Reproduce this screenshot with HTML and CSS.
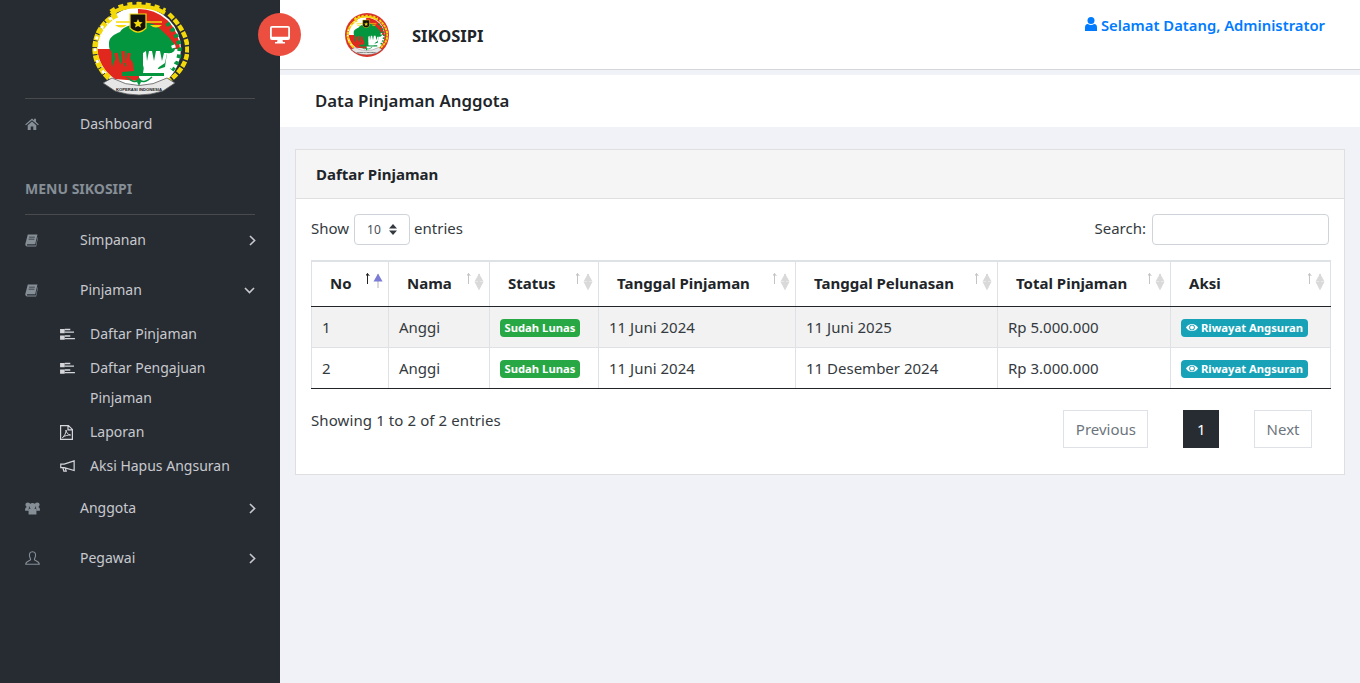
FILE: index.html
```html
<!DOCTYPE html>
<html>
<head>
    <title>SIKOSIPI - Data Pinjaman Anggota</title>
    <link rel="stylesheet" href="styles.css">
</head>
<body>
    <svg class="defs" width="0" height="0">
        <defs>
            <symbol id="emblem" viewBox="92 0 98 96">
                <circle cx="140" cy="48" r="42" fill="#fff"/>
                <path d="M139 8 A41 41 0 0 1 181 48 L139 48 Z" fill="#e0281f"/>
                <path d="M98 48 L140 48 L140 80 L116 78 A42 42 0 0 1 98 48 Z" fill="#e0281f"/>
                <!-- tree -->
                <path d="M110 42 C110 36 116 33 121 31 C126 22 150 20 156 24 C164 30 172 38 176 44 C177 50 174 53 168 52 L166 66 L160 68 L150 68 L146 60 L144 72 L165 72 L165 75 L123 75 L123 71 L135 70 L134 62 L130 56 L127 66 L123 60 L120 66 L116 58 L113 66 C112 58 114 52 112 50 C110 48 110 46 110 42 Z" fill="#03963e"/>
                <path d="M144 52 L147 50 L148 60 L150 50 L153 50 L155 60 L157 50 L161 50 L163 60 L165 52 L168 52 L166 62 L160 66 L156 72 L146 72 L144 64 Z" fill="#fff"/>
                <path d="M117 52 L120 66 M124 50 L125 62 M130 52 L128 64" stroke="#e0281f" stroke-width="3.5" fill="none"/>
                <path d="M128 76 Q136 84 140 78 Q144 84 153 76" fill="none" stroke="#03963e" stroke-width="1.6"/>
                <path d="M140 77 L142 81 L140 85 L138 81 Z" fill="#03963e"/>
                <!-- chain on the left -->
                <path d="M118 14 C98 22 84 54 111 78" fill="none" stroke="#f4d90a" stroke-width="5.5" stroke-dasharray="6 1"/>
                <path d="M118 14 C98 22 84 54 111 78" fill="none" stroke="#fff" stroke-width="2.8" stroke-dasharray="3 9" stroke-dashoffset="-6"/>
                <!-- gear on the top -->
                <path d="M112 13 C125 3 150 3 166 12" fill="none" stroke="#f4d90a" stroke-width="4"/>
                <path d="M112 11 C125 1 150 1 166 10" fill="none" stroke="#f4d90a" stroke-width="5" stroke-dasharray="5 4"/>
                <!-- rice and leaves on the right -->
                <path d="M170 13 C194 36 196 62 167 82" fill="none" stroke="#f4d90a" stroke-width="4.5" stroke-dasharray="6 1.6"/>
                <path d="M168 22 C183 38 185 56 172 70" fill="none" stroke="#03963e" stroke-width="4.4" stroke-dasharray="3.6 3.4"/>
                <path d="M174 44 C177 52 176 60 171 67" fill="none" stroke="#fff" stroke-width="4" stroke-dasharray="3 4"/>
                <!-- scale and shield -->
                <path d="M117 21 H163" stroke="#f4d90a" stroke-width="1.6"/>
                <path d="M116 24 H128 Q122 29 116 24 Z M151 24 H163 Q157 29 151 24 Z" fill="#f4d90a"/>
                <path d="M131 13 H147 V27 Q139 35 131 27 Z" fill="#14110c" stroke="#f4d90a" stroke-width="1.2"/>
                <path d="M139 18 L140.4 21 L143.6 21.2 L141.2 23.4 L142 26.6 L139 25 L136 26.6 L136.8 23.4 L134.4 21.2 L137.6 21 Z" fill="#f4d90a"/>
                <!-- banner -->
                <path d="M104 82 L113 77 Q140 92 168 77 L176 82 L164 90 Q140 98 116 90 Z" fill="#e6e6e6" stroke="#555" stroke-width=".8"/>
                <text x="140" y="90" class="emblem-text" textLength="46" lengthAdjust="spacingAndGlyphs">KOPERASI INDONESIA</text>
            </symbol>
            <symbol id="i-home" viewBox="0 0 16 14">
                <path d="M8 .5 L10.4 2.6 V1 H12.6 V4.5 L16 7.5 L15 8.5 L8 2.5 L1 8.5 L0 7.5 Z M3 8.6 L8 4.2 L13 8.6 V14 H9.5 V10 H6.5 V14 H3 Z" fill="currentColor"/>
            </symbol>
            <symbol id="i-book" viewBox="0 0 14 14">
                <path d="M3 .5 H13.4 L11 11 H2.4 Q1.6 12.4 2.6 12.5 H11.6 L13.6 3.4 L14 3.8 L12 13.5 H2 Q-.4 13 .6 9.6 Z" fill="currentColor"/>
                <path d="M4.4 3.4 H10.6 M3.9 5.6 H10.1" stroke="#272c33" stroke-width=".8"/>
            </symbol>
            <symbol id="i-tasks" viewBox="0 0 16 14">
                <path d="M0 1 H5 V5.6 H0 Z M0 8 H5 V12.6 H0 Z" fill="currentColor"/>
                <path d="M5 1.6 H11 M5 4.4 H15 M5 8.6 H11 M5 11.4 H16" stroke="currentColor" stroke-width="1.4" fill="none"/>
            </symbol>
            <symbol id="i-pdf" viewBox="0 0 13 15">
                <path d="M.6 .6 H8.4 L12.4 4.4 V14.4 H.6 Z M8 .8 V4.8 H12.2" fill="none" stroke="currentColor" stroke-width="1.2"/>
                <path d="M2.4 12.6 C4.6 11 6.4 7.4 6 5 C6.4 8 8 9.6 10.6 10 C8 10 4.6 10.6 2.4 12.6 Z" fill="none" stroke="currentColor"/>
            </symbol>
            <symbol id="i-bullhorn" viewBox="0 0 16 13">
                <path d="M.7 4.4 H4.4 L15.2 .9 V11.4 L4.4 8.2 H.7 Z M3 8.4 L4 12 H6.6 L5.6 8.8" fill="none" stroke="currentColor" stroke-width="1.3"/>
            </symbol>
            <symbol id="i-users" viewBox="0 0 16 13">
                <circle cx="3" cy="2.6" r="2.6" fill="currentColor"/>
                <circle cx="13" cy="2.6" r="2.6" fill="currentColor"/>
                <circle cx="8" cy="3.8" r="3.3" fill="currentColor"/>
                <path d="M0 8.6 Q0 5 2.4 5 L4.4 5 Q3.8 7 4 9 H.6 Z M16 8.6 Q16 5 13.6 5 L11.6 5 Q12.2 7 12 9 H15.4 Z M3.8 13 V9.2 Q3.8 6.6 6 6.6 H10 Q12.2 6.6 12.2 9.2 V13 Z" fill="currentColor"/>
            </symbol>
            <symbol id="i-user-o" viewBox="0 0 15 14">
                <path d="M7.5 .7 C4.9 .7 4.2 3 4.5 5 C4.7 6.6 5.6 7.4 5.6 8.4 C5.6 9.8 .7 10 .7 13.3 H14.3 C14.3 10 9.4 9.8 9.4 8.4 C9.4 7.4 10.3 6.6 10.5 5 C10.8 3 10.1 .7 7.5 .7 Z" fill="none" stroke="currentColor" stroke-width="1.1"/>
            </symbol>
            <symbol id="i-user" viewBox="0 0 12 14">
                <circle cx="6" cy="3.6" r="3.5" fill="currentColor"/>
                <path d="M0 14 V10.4 Q0 7.4 2.8 7 Q6 8.8 9.2 7 Q12 7.4 12 10.4 V14 Z" fill="currentColor"/>
            </symbol>
            <symbol id="i-eye" viewBox="0 0 14 10">
                <path d="M0 5 C3 -.6 11 -.6 14 5 C11 10.6 3 10.6 0 5 Z" fill="currentColor"/>
                <circle cx="7" cy="5" r="3.3" fill="#17a2b8"/>
                <circle cx="7" cy="5" r="2.2" fill="currentColor"/>
            </symbol>
            <symbol id="i-sort" viewBox="0 0 20 18">
                <path d="M1.5 11 V.6 M-.3 3 L1.5 .4 L3.3 3" class="sort-up" fill="none" stroke-width="1"/>
                <path d="M12 1 V15" fill="none" stroke="#b4b4b4" stroke-width="1"/>
                <path d="M7.5 8.4 L12 .6 L16.5 8.4 Z" class="sort-tri-up"/>
                <path d="M7.5 8.8 L12 17.4 L16.5 8.8 Z" class="sort-tri-down"/>
            </symbol>
        </defs>
    </svg>

    <aside class="sidebar">
        <div class="sidebar-logo">
            <svg width="98" height="96"><use href="#emblem"/></svg>
        </div>
        <nav class="menu">
            <a class="menu-item" href="#">
                <span class="menu-icon"><svg width="14" height="12"><use href="#i-home"/></svg></span>
                <span class="menu-label">Dashboard</span>
            </a>
            <div class="menu-title">MENU SIKOSIPI</div>
            <a class="menu-item" href="#">
                <span class="menu-icon"><svg width="13" height="13"><use href="#i-book"/></svg></span>
                <span class="menu-label">Simpanan</span>
                <svg class="chevron" width="7" height="11" viewBox="0 0 7 11"><path d="M1 1 L5.6 5.5 L1 10"/></svg>
            </a>
            <a class="menu-item" href="#">
                <span class="menu-icon"><svg width="13" height="13"><use href="#i-book"/></svg></span>
                <span class="menu-label">Pinjaman</span>
                <svg class="chevron chevron-down" width="11" height="7" viewBox="0 0 11 7"><path d="M1 1 L5.5 5.6 L10 1"/></svg>
            </a>
            <ul class="submenu">
                <li><span class="sub-icon"><svg width="15" height="13"><use href="#i-tasks"/></svg></span><span>Daftar Pinjaman</span></li>
                <li><span class="sub-icon"><svg width="15" height="13"><use href="#i-tasks"/></svg></span><span>Daftar Pengajuan Pinjaman</span></li>
                <li><span class="sub-icon"><svg width="13" height="15"><use href="#i-pdf"/></svg></span><span>Laporan</span></li>
                <li><span class="sub-icon"><svg width="15" height="12"><use href="#i-bullhorn"/></svg></span><span>Aksi Hapus Angsuran</span></li>
            </ul>
            <a class="menu-item" href="#">
                <span class="menu-icon"><svg width="15" height="13"><use href="#i-users"/></svg></span>
                <span class="menu-label">Anggota</span>
                <svg class="chevron" width="7" height="11" viewBox="0 0 7 11"><path d="M1 1 L5.6 5.5 L1 10"/></svg>
            </a>
            <a class="menu-item" href="#">
                <span class="menu-icon"><svg width="15" height="14"><use href="#i-user-o"/></svg></span>
                <span class="menu-label">Pegawai</span>
                <svg class="chevron" width="7" height="11" viewBox="0 0 7 11"><path d="M1 1 L5.6 5.5 L1 10"/></svg>
            </a>
        </nav>
    </aside>

    <button type="button" class="toggle">
        <svg width="20" height="18" viewBox="0 0 20 18">
            <path fill-rule="evenodd" d="M2 0 H18 Q20 0 20 2 V12 Q20 14 18 14 H12.5 L13 16 H15 V17.4 H5 V16 H7 L7.5 14 H2 Q0 14 0 12 V2 Q0 0 2 0 Z M1.8 1.8 V10.8 H18.2 V1.8 Z" fill="#fff"/>
        </svg>
    </button>

    <main class="main">
        <header class="topbar">
            <div class="brand">
                <div class="brand-logo"><svg width="42" height="42"><use href="#emblem"/></svg></div>
                <span class="brand-name">SIKOSIPI</span>
            </div>
            <a class="welcome" href="#">
                <svg width="12" height="14"><use href="#i-user"/></svg>
                Selamat Datang, Administrator
            </a>
        </header>

        <div class="page-title">
            <h1>Data Pinjaman Anggota</h1>
        </div>

        <section class="card">
            <div class="card-header">Daftar Pinjaman</div>
            <div class="card-body">
                <div class="dt-top">
                    <label class="dt-length">Show
                        <span class="fake-select"><span>10</span>
                            <svg width="8" height="11" viewBox="0 0 8 11"><path d="M0 4.4 L4 0 L8 4.4 Z M0 6.6 L4 11 L8 6.6 Z" fill="#343a40"/></svg>
                        </span>
                        entries</label>
                    <label class="dt-search">Search: <input type="text"></label>
                </div>

                <table class="dt-table">
                    <thead>
                        <tr>
                            <th class="col-no sorted">No<svg class="sort" width="20" height="18"><use href="#i-sort"/></svg></th>
                            <th class="col-nama">Nama<svg class="sort" width="20" height="18"><use href="#i-sort"/></svg></th>
                            <th class="col-status">Status<svg class="sort" width="20" height="18"><use href="#i-sort"/></svg></th>
                            <th class="col-pinjam">Tanggal Pinjaman<svg class="sort" width="20" height="18"><use href="#i-sort"/></svg></th>
                            <th class="col-lunas">Tanggal Pelunasan<svg class="sort" width="20" height="18"><use href="#i-sort"/></svg></th>
                            <th class="col-total">Total Pinjaman<svg class="sort" width="20" height="18"><use href="#i-sort"/></svg></th>
                            <th class="col-aksi">Aksi<svg class="sort" width="20" height="18"><use href="#i-sort"/></svg></th>
                        </tr>
                    </thead>
                    <tbody>
                        <tr class="odd">
                            <td>1</td>
                            <td>Anggi</td>
                            <td><span class="badge badge-success">Sudah Lunas</span></td>
                            <td>11 Juni 2024</td>
                            <td>11 Juni 2025</td>
                            <td>Rp 5.000.000</td>
                            <td><a class="badge badge-info" href="#"><svg width="12" height="9"><use href="#i-eye"/></svg> Riwayat Angsuran</a></td>
                        </tr>
                        <tr>
                            <td>2</td>
                            <td>Anggi</td>
                            <td><span class="badge badge-success">Sudah Lunas</span></td>
                            <td>11 Juni 2024</td>
                            <td>11 Desember 2024</td>
                            <td>Rp 3.000.000</td>
                            <td><a class="badge badge-info" href="#"><svg width="12" height="9"><use href="#i-eye"/></svg> Riwayat Angsuran</a></td>
                        </tr>
                    </tbody>
                </table>

                <div class="dt-bottom">
                    <div class="dt-info">Showing 1 to 2 of 2 entries</div>
                    <ul class="pagination">
                        <li class="page-btn">Previous</li>
                        <li class="page-btn current">1</li>
                        <li class="page-btn">Next</li>
                    </ul>
                </div>
            </div>
        </section>
    </main>
</body>
</html>
```

FILE: styles.css
```css
* {
    box-sizing: border-box;
}

body {
    font-family: "Noto Sans", "Open Sans", sans-serif;
    font-size: 15px;
    color: #212529;
    margin: 0;
    background-color: #f1f2f7;
    display: flex;
    height: 683px;
    overflow: hidden;
}

.defs {
    position: absolute;
}

.emblem-text {
    font-family: "Liberation Sans", sans-serif;
    font-size: 4.4px;
    font-weight: bold;
    fill: #222;
    text-anchor: middle;
}

/* sidebar */
.sidebar {
    width: 280px;
    flex-shrink: 0;
    background-color: #272c33;
    padding: 0 25px;
    color: #c8c9ce;
}

.sidebar-logo {
    height: 99px;
    padding-top: 1px;
    border-bottom: 1px solid #4a4b4d;
    display: flex;
    justify-content: center;
}

.menu {
    font-size: 14px;
}

.menu-item {
    display: flex;
    align-items: center;
    height: 50px;
    color: #c8c9ce;
    text-decoration: none;
}

.menu-icon {
    width: 55px;
    flex-shrink: 0;
    color: #868e96;
    display: flex;
    align-items: center;
}

.menu-label {
    flex: 1;
    padding-bottom: 2px;
}

.chevron {
    fill: none;
    stroke: #c8c9ce;
    stroke-width: 1.6;
    margin-right: -1px;
}

.chevron-down {
    margin-right: 0;
}

.menu-title {
    height: 66px;
    padding-top: 30px;
    line-height: 20px;
    font-weight: 700;
    color: #868e96;
    border-bottom: 1px solid #4a4b4d;
}

.submenu {
    list-style: none;
    margin: 2px 0 0;
    padding: 0 0 0 35px;
    line-height: 30px;
}

.submenu li {
    display: flex;
    padding: 2px 0;
    color: #c8c9ce;
}

.sub-icon {
    width: 30px;
    height: 30px;
    flex-shrink: 0;
    display: flex;
    align-items: center;
    color: #d5d6da;
}

/* round button on the sidebar edge */
.toggle {
    position: absolute;
    left: 258px;
    top: 13px;
    width: 43px;
    height: 43px;
    border: none;
    border-radius: 50%;
    background-color: #ec4f3f;
    padding: 3px 0 0;
    z-index: 5;
}

/* main */
.main {
    flex: 1;
    min-width: 0;
}

.topbar {
    height: 70px;
    background-color: #fff;
    border-bottom: 1px solid #d5d6da;
    display: flex;
    justify-content: space-between;
    padding: 0 35px 0 65px;
}

.brand {
    display: flex;
    align-items: center;
    gap: 23px;
}

.brand-logo {
    width: 44px;
    height: 44px;
    border-radius: 50%;
    overflow: hidden;
    background-color: #d9342b;
    display: flex;
    align-items: center;
    justify-content: center;
}

.brand-name {
    font-size: 16.5px;
    font-weight: 700;
    color: #212529;
    padding-top: 2px;
}

.welcome {
    color: #007bff;
    font-weight: 600;
    font-size: 14.8px;
    text-decoration: none;
    line-height: 20px;
    margin-top: 15px;
}

.page-title {
    margin-top: 5px;
    height: 52px;
    background-color: #fff;
    padding-left: 35px;
    padding-bottom: 1px;
    display: flex;
    align-items: center;
}

.page-title h1 {
    margin: 0;
    font-size: 16.8px;
    font-weight: 600;
}

.card {
    margin: 22px 15px 0;
    height: 326px;
    background-color: #fff;
    border: 1px solid #dfdfdf;
}

.card-header {
    height: 49px;
    background-color: #f5f5f5;
    border-bottom: 1px solid #dfdfdf;
    padding-left: 20px;
    line-height: 48px;
    font-weight: 700;
    font-size: 15px;
}

.card-body {
    padding: 15px 15px 0;
}

.dt-top {
    display: flex;
    justify-content: space-between;
    height: 46px;
}

.dt-length, .dt-search {
    display: flex;
    align-items: flex-start;
    line-height: 28px;
    color: #343a40;
}

.fake-select {
    width: 56px;
    height: 31px;
    margin: 0 4px 0 5px;
    border: 1px solid #ced4da;
    border-radius: 4px;
    font-size: 12px;
    line-height: 31px;
    padding-left: 12px;
    display: flex;
    gap: 8px;
    align-items: center;
    color: #495057;
}

.dt-search input {
    width: 177px;
    height: 31px;
    margin-left: 6px;
    border: 1px solid #ced4da;
    border-radius: 4px;
}

.dt-table {
    width: 1019px;
    table-layout: fixed;
    border-collapse: collapse;
    border-top: 2px solid #dee2e6;
}

.col-no { width: 77px; }
.col-nama { width: 101px; }
.col-status { width: 109px; }
.col-pinjam { width: 197px; }
.col-lunas { width: 202px; }
.col-total { width: 173px; }
.col-aksi { width: 160px; }

.dt-table th {
    position: relative;
    height: 45px;
    padding: 0 18px 2px;
    text-align: left;
    font-size: 15px;
    font-weight: 700;
    border: 1px solid #dee2e6;
    border-bottom: 1px solid #212529;
}

/* custom properties reach through <use>, plain selectors do not */
.sort {
    position: absolute;
    right: 2px;
    top: 11px;
    overflow: visible;
    --arrow: #c4c4c4;
    --tri-up: #d9d9d9;
    --tri-down: #d9d9d9;
}

.sorted .sort {
    --arrow: #222;
    --tri-up: #7c7cd6;
    --tri-down: none;
}

.sort-up {
    stroke: var(--arrow);
}

.sort-tri-up {
    fill: var(--tri-up);
}

.sort-tri-down {
    fill: var(--tri-down);
}

.dt-table td {
    height: 41px;
    padding: 0 10px;
    border: 1px solid #dee2e6;
    color: #343a40;
}

.dt-table tbody tr:last-child td {
    border-bottom: 1px solid #212529;
}

.odd td {
    background-color: #f2f2f2;
}

.badge {
    display: inline-block;
    padding: 0 4.5px;
    height: 18px;
    line-height: 18px;
    border-radius: 4px;
    color: #fff;
    font-size: 11.25px;
    font-weight: 700;
    text-decoration: none;
    vertical-align: middle;
}

.badge-success {
    background-color: #28a745;
}

.badge-info {
    background-color: #17a2b8;
    padding: 0 5px;
}

.dt-bottom {
    display: flex;
    justify-content: space-between;
    margin-top: 21px;
}

.dt-info {
    line-height: 20px;
    color: #343a40;
    letter-spacing: .1px;
}

.pagination {
    list-style: none;
    display: flex;
    gap: 35px;
    margin: 0 17px 0 0;
    padding: 0;
}

.page-btn {
    height: 38px;
    padding: 0 11.5px;
    line-height: 36px;
    border: 1px solid #dee2e6;
    color: #6c757d;
}

.page-btn.current {
    background-color: #272c33;
    border-color: #272c33;
    color: #fff;
    padding: 0 12.5px;
}
```
